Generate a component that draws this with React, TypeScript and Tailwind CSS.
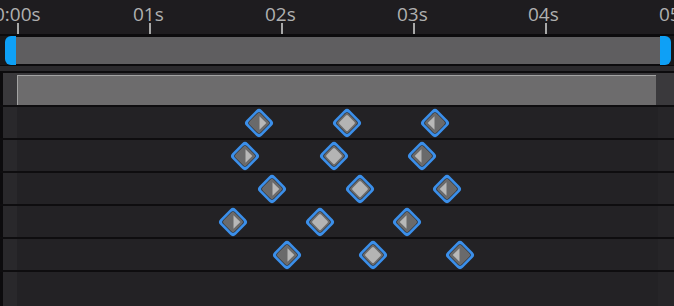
import React from "react";

type Kind = "in" | "mid" | "out";

function Key({ x, kind }: { x: number; kind: Kind }) {
  return (
    <svg
      width="32"
      height="32"
      viewBox="0 0 32 32"
      className="absolute top-0"
      style={{ left: x - 16 }}
    >
      <g transform="rotate(45 16 16)">
        <rect x="5" y="5" width="22" height="22" rx="4" fill="#3b8fea" />
        <rect x="7.6" y="7.6" width="16.8" height="16.8" rx="3" fill="#2c2c2e" />
        <rect x="8.2" y="8.2" width="15.6" height="15.6" rx="2.5" fill="#6a6a6b" />
        {kind === "mid" && (
          <rect x="10" y="10" width="12" height="12" rx="1.5" fill="#b4b4b4" />
        )}
      </g>
      {kind === "in" && <polygon points="16.5,9.2 23.3,16 16.5,22.8" fill="#b8b8b8" />}
      {kind === "out" && <polygon points="15.5,9.2 8.7,16 15.5,22.8" fill="#b8b8b8" />}
    </svg>
  );
}

const rows: number[][] = [
  [259, 347, 435],
  [245, 334, 422],
  [272, 360, 447],
  [233, 320, 407],
  [287, 373, 460],
];

const ticks = [17, 149, 281, 413, 545];
const labels = [
  { t: "0:00s", left: -6 },
  { t: "01s", left: 133 },
  { t: "02s", left: 265 },
  { t: "03s", left: 397 },
  { t: "04s", left: 528 },
  { t: "05s", left: 659 },
];

export default function App() {
  return (
    <div
      className="w-[674px] h-[306px] overflow-hidden bg-[#232225] flex flex-col"
      style={{ fontFamily: '"Open Sans", "Noto Sans", sans-serif' }}
    >
      {/* ruler */}
      <div className="relative h-[34px] shrink-0 bg-[#1e1c1f]">
        {labels.map((l) => (
          <span
            key={l.t}
            className="absolute top-[1px] text-[19px] leading-[26px] text-[#b0b0b0]"
            style={{ left: l.left }}
          >
            {l.t}
          </span>
        ))}
        {ticks.map((x) => (
          <div
            key={x}
            className="absolute top-[23px] h-[11px] w-[1.5px] bg-[#a8a8a8]"
            style={{ left: x }}
          />
        ))}
      </div>
      <div className="h-[2px] shrink-0 bg-[#0c0b0d]" />
      {/* scrubber */}
      <div className="h-[29px] shrink-0 flex bg-[#19181a] pl-[5px] pr-[3px]">
        <div className="w-[11px] rounded-l-[6px] bg-[#0ea0f6]" />
        <div className="flex-1 bg-[#5f5e60] border-y border-[#0c0b0d]" />
        <div className="w-[11px] rounded-r-[6px] bg-[#0ea0f6]" />
      </div>
      <div className="h-[1px] shrink-0 bg-[#0c0b0d]" />
      <div className="h-[5px] shrink-0 bg-[#2b2a2d]" />
      <div className="h-[2px] shrink-0 bg-[#0c0b0d]" />
      {/* work area */}
      <div className="h-[32px] shrink-0 flex bg-[#3a393c]">
        <div className="w-[3px] bg-[#0c0b0d]" />
        <div className="w-[14px]" />
        <div className="w-[639px] mt-[2px] bg-[#6d6c6d] border-t border-l border-[#a3a3a3]" />
      </div>
      {/* rows */}
      {rows.map((r, i) => (
        <div key={i} className="h-[33px] shrink-0 border-t-2 border-[#0e0d0f] flex">
          <div className="w-[3px] bg-[#0c0b0d]" />
          <div className="w-[14px] bg-[#29282b]" />
          <div className="relative flex-1">
            {r.map((x, j) => (
              <Key key={x} x={x - 17} kind={j === 0 ? "in" : j === 1 ? "mid" : "out"} />
            ))}
          </div>
          <div className="w-[16px] bg-[#262528]" />
        </div>
      ))}
      <div className="flex-1 border-t-2 border-[#0e0d0f] flex">
        <div className="w-[3px] bg-[#0c0b0d]" />
        <div className="w-[14px] bg-[#29282b]" />
        <div className="flex-1" />
        <div className="w-[16px] bg-[#262528]" />
      </div>
    </div>
  );
}
